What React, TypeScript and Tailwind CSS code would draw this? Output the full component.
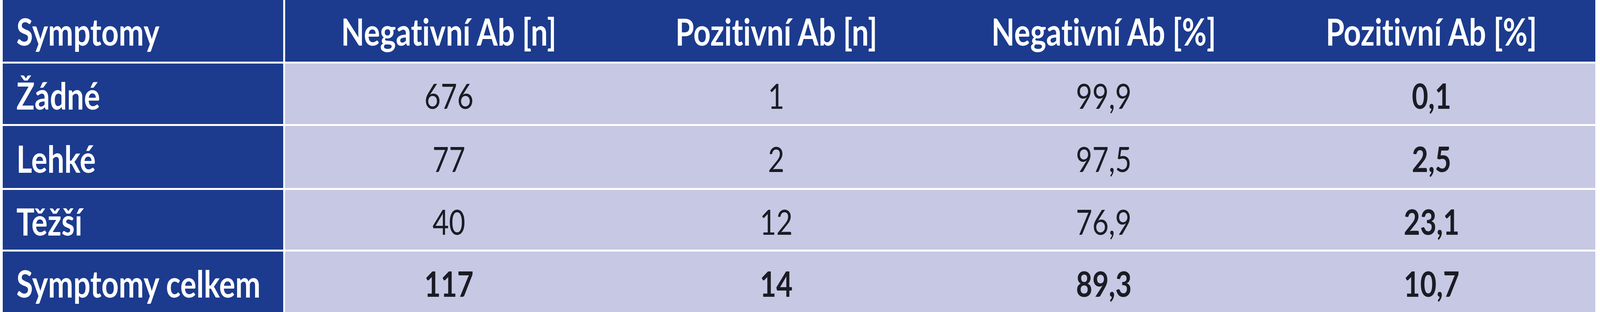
import React, { useEffect, useState } from "react";

type Cell = { v: string; b?: boolean };
type Row = { label: string; h: string; cells: Cell[] };

const rows: Row[] = [
  { label: "Žádné", h: "h-[155px]", cells: [{ v: "676" }, { v: "1" }, { v: "99,9" }, { v: "0,1", b: true }] },
  { label: "Lehké", h: "h-[159px]", cells: [{ v: "77" }, { v: "2" }, { v: "97,5" }, { v: "2,5", b: true }] },
  { label: "Těžší", h: "h-[153px]", cells: [{ v: "40" }, { v: "12" }, { v: "76,9" }, { v: "23,1", b: true }] },
  {
    label: "Symptomy celkem",
    h: "h-[155px]",
    cells: [
      { v: "117", b: true },
      { v: "14", b: true },
      { v: "89,3", b: true },
      { v: "10,7", b: true },
    ],
  },
];

const headers = ["Negativní Ab [n]", "Pozitivní Ab [n]", "Negativní Ab [%]", "Pozitivní Ab [%]"];

function useScale() {
  const get = () => (typeof window === "undefined" ? 1 : Math.min(1, window.innerWidth / 5272));
  const [f, setF] = useState(get);
  useEffect(() => {
    const on = () => setF(get());
    window.addEventListener("resize", on);
    return () => window.removeEventListener("resize", on);
  }, []);
  return f;
}

export default function App() {
  const f = useScale();
  const sx = { transform: `scaleX(${f * 1.035})` };
  return (
    <div
      className="w-full h-[800px] overflow-hidden bg-white pl-[0.17vw] pr-[0.3vw] flex flex-col gap-[5px] leading-none [font-variant-ligatures:none]"
      style={{ fontFamily: "Lato, 'Open Sans', sans-serif" }}
    >
      <div className="grid grid-cols-[924fr_4318fr] gap-x-[5px] h-[158px]">
        <div className="min-w-0 bg-[#1c3b8e] text-white font-bold text-[96px] flex items-center pl-[0.854vw] pt-[1px] whitespace-nowrap">
          <span className="inline-block origin-left" style={sx}>
            Symptomy
          </span>
        </div>
        <div className="min-w-0 grid grid-cols-[repeat(4,minmax(0,1fr))] bg-[#1c3b8e]">
          {headers.map((h) => (
            <div
              key={h}
              className="min-w-0 flex items-center justify-center text-white font-bold text-[96px] pt-[1px] whitespace-nowrap"
            >
              <span className="inline-block origin-center" style={sx}>
                {h}
              </span>
            </div>
          ))}
        </div>
      </div>
      {rows.map((r) => (
        <div key={r.label} className={`grid grid-cols-[924fr_4318fr] gap-x-[5px] ${r.h}`}>
          <div className="min-w-0 bg-[#1c3b8e] text-white font-bold text-[96px] flex items-center pl-[0.854vw] pt-[6px] whitespace-nowrap">
            <span className="inline-block origin-left" style={sx}>
              {r.label}
            </span>
          </div>
          <div className="min-w-0 grid grid-cols-[repeat(4,minmax(0,1fr))] bg-[#c6c8e4]">
            {r.cells.map((c, i) => (
              <div
                key={i}
                className={`min-w-0 flex items-center justify-center text-[#1b1b24] text-[90px] pt-[7px] whitespace-nowrap ${
                  c.b ? "font-bold" : "font-normal"
                }`}
              >
                <span className="inline-block origin-center" style={sx}>
                  {c.v}
                </span>
              </div>
            ))}
          </div>
        </div>
      ))}
    </div>
  );
}
